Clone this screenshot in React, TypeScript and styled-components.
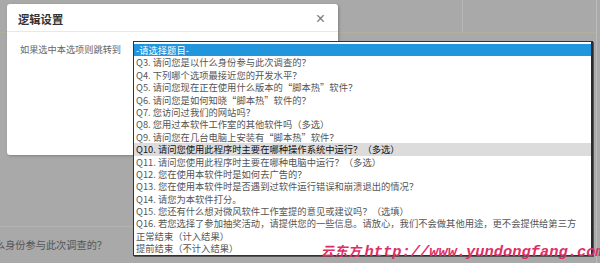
import React from "react";
import styled, { createGlobalStyle } from "styled-components";

const GlobalStyle = createGlobalStyle`
  html, body {
    margin: 0;
    padding: 0;
    background: #a9a9a9;
    overflow: hidden;
  }
  #root {
    width: 600px;
    height: 263px;
  }
`;

const Screen = styled.div`
  position: relative;
  width: 600px;
  height: 263px;
  overflow: hidden;
  background: #a9a9a9;
  font-family: "Noto Sans CJK SC", "Noto Sans", sans-serif;
`;

// page behind the dimmed overlay
const BackPage = styled.div`
  display: flex;
  flex-direction: row;
  width: 100%;
  height: 100%;
`;

const BackMain = styled.div`
  flex: 1;
  display: flex;
  flex-direction: column;
`;

const BackTopBar = styled.div`
  height: 32px;
  display: flex;
  flex-direction: row;
  justify-content: flex-end;
  border-bottom: 1px solid #b3af9f;
`;

const BackTopCell = styled.div`
  width: 133px;
  border-left: 1px solid #b7b7b7;
`;

const BackFiller = styled.div`
  flex: auto;
`;

const BackQuestion = styled.div`
  height: 37px;
  border-top: 1px solid #b2b2b2;
  padding-top: 11px;
  box-sizing: border-box;
  font-size: 10.2px;
  line-height: 14px;
  color: #555;
  white-space: nowrap;
  overflow: hidden;
`;

const CutText = styled.span`
  margin-left: -5px;
`;

const BackScroll = styled.div`
  width: 3px;
  border-left: 1px solid #bcbcbc;
`;

// modal dialog
const Modal = styled.div`
  position: absolute;
  left: 7px;
  top: 4px;
  width: 331px;
  height: 151px;
  background: #fff;
  border-radius: 3px;
  box-shadow: 1px 1px 3px rgba(0, 0, 0, 0.25);
  display: flex;
  flex-direction: column;
`;

const ModalHeader = styled.div`
  height: 28px;
  display: flex;
  flex-direction: row;
  align-items: center;
  justify-content: space-between;
  padding: 2px 13px 0 11px;
  box-sizing: border-box;
  border-bottom: 1px solid #e8e8e8;
`;

const Title = styled.span`
  font-size: 11.3px;
  font-weight: bold;
  color: #333;
`;

const CloseButton = styled.span`
  font-family: "Liberation Sans", sans-serif;
  font-size: 16px;
  color: #7a7a7a;
  line-height: 16px;
`;

const ModalBody = styled.div`
  display: flex;
  flex-direction: row;
  padding: 11px 13px;
`;

const FieldLabel = styled.label`
  font-size: 9.2px;
  line-height: 12px;
  color: #666;
  white-space: nowrap;
`;

// opened select dropdown
const Listbox = styled.ul`
  position: absolute;
  left: 133px;
  top: 41px;
  width: 457px;
  margin: 0;
  padding: 2px 0 0 0;
  list-style: none;
  background: #fff;
  border: 1px solid #333;
  border-right: 2px solid #2a2a2a;
  box-shadow: 1px 1px 0 #555;
`;

const Option = styled.li<{ selected?: boolean; hovered?: boolean }>`
  height: 12.4px;
  line-height: 12.4px;
  padding-left: 2px;
  font-size: 9.3px;
  white-space: nowrap;
  overflow: hidden;
  color: ${(p) => (p.selected ? "#fff" : p.hovered ? "#111" : "#555")};
  background: ${(p) => (p.selected ? "#2196dc" : p.hovered ? "#dcdcdc" : "transparent")};
`;

const Watermark = styled.div`
  position: absolute;
  left: 321px;
  top: 241px;
  display: flex;
  flex-direction: row;
  align-items: baseline;
  white-space: nowrap;
  color: #dc2f66;
  font-style: italic;
  font-weight: bold;
`;

const WatermarkCn = styled.span`
  font-family: "Noto Sans CJK SC", sans-serif;
  font-size: 13px;
  letter-spacing: 0.5px;
`;

const WatermarkUrl = styled.span`
  margin-left: 3px;
  font-family: "Liberation Mono", monospace;
  font-size: 15.4px;
`;

const options = [
  "-请选择题目-",
  "Q3. 请问您是以什么身份参与此次调查的？",
  "Q4. 下列哪个选项最接近您的开发水平？",
  "Q5. 请问您现在正在使用什么版本的“脚本热”软件？",
  "Q6. 请问您是如何知晓“脚本热”软件的？",
  "Q7. 您访问过我们的网站吗？",
  "Q8. 您用过本软件工作室的其他软件吗（多选）",
  "Q9. 请问您在几台电脑上安装有“脚本热”软件？",
  "Q10. 请问您使用此程序时主要在哪种操作系统中运行？（多选）",
  "Q11. 请问您使用此程序时主要在哪种电脑中运行？（多选）",
  "Q12. 您在使用本软件时是如何去广告的？",
  "Q13. 您在使用本软件时是否遇到过软件运行错误和崩溃退出的情况？",
  "Q14. 请您为本软件打分。",
  "Q15. 您还有什么想对微风软件工作室提的意见或建议吗？（选填）",
  "Q16. 若您选择了参加抽奖活动，请提供您的一些信息。请放心，我们不会做其他用途，更不会提供给第三方",
  "正常结束（计入结果）",
  "提前结束（不计入结果）",
];

export default function App() {
  return (
    <>
      <GlobalStyle />
      <Screen>
        <BackPage>
          <BackMain>
            <BackTopBar>
              <BackTopCell />
            </BackTopBar>
            <BackFiller />
            <BackQuestion>
              <CutText>么身份参与此次调查的？</CutText>
            </BackQuestion>
          </BackMain>
          <BackScroll />
        </BackPage>

        <Modal>
          <ModalHeader>
            <Title>逻辑设置</Title>
            <CloseButton>×</CloseButton>
          </ModalHeader>
          <ModalBody>
            <FieldLabel>如果选中本选项则跳转到</FieldLabel>
          </ModalBody>
        </Modal>

        <Listbox>
          {options.map((text, i) => (
            <Option key={text} selected={i === 0} hovered={i === 8}>
              {text}
            </Option>
          ))}
        </Listbox>

        <Watermark>
          <WatermarkCn>云东方</WatermarkCn>
          <WatermarkUrl>http://www.yundongfang.com</WatermarkUrl>
        </Watermark>
      </Screen>
    </>
  );
}
